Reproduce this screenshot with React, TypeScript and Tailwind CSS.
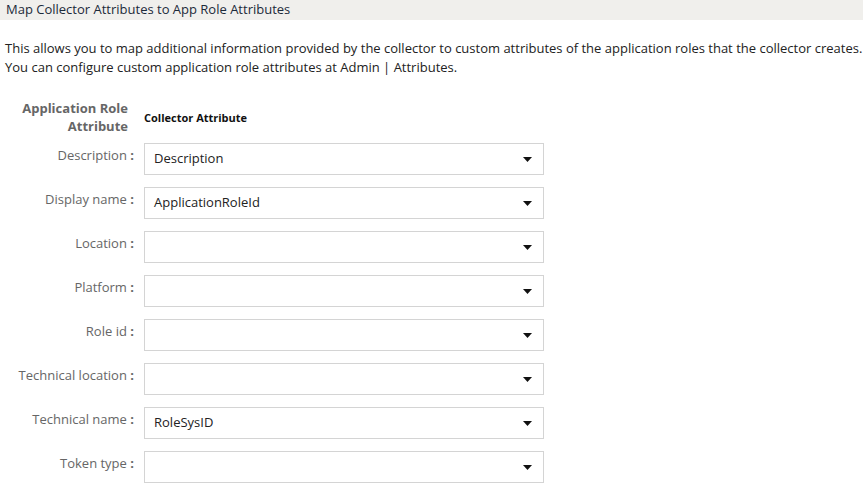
const rows: { label: string; value: string }[] = [
  { label: "Description", value: "Description" },
  { label: "Display name", value: "ApplicationRoleId" },
  { label: "Location", value: "" },
  { label: "Platform", value: "" },
  { label: "Role id", value: "" },
  { label: "Technical location", value: "" },
  { label: "Technical name", value: "RoleSysID" },
  { label: "Token type", value: "" },
];

function SelectBox({ value }: { value: string }) {
  return (
    <div className="flex h-[32px] w-[400px] items-center justify-between border border-[#d4d4d4] bg-white pl-[9px] pr-[11px] text-[13px] text-[#222]">
      <span>{value}</span>
      <svg width="9" height="5" viewBox="0 0 9 5" className="mt-[1px]">
        <path d="M0 0h9L4.5 5z" fill="#111" />
      </svg>
    </div>
  );
}

export default function App() {
  return (
    <div className="h-[491px] w-[863px] overflow-hidden bg-white font-['Open_Sans',sans-serif]">
      <div className="flex h-[20px] items-center bg-[#f0efec] pl-[6px] text-[13px] text-[#1c2a3a]">
        Map Collector Attributes to App Role Attributes
      </div>

      <div className="mt-[19px] pl-[5px] text-[13px] leading-[19px] text-[#222]">
        <p>
          This allows you to map additional information provided by the collector to custom attributes of the
          application roles that the collector creates.
        </p>
        <p>You can configure custom application role attributes at Admin | Attributes.</p>
      </div>

      <div className="mt-[22px] flex items-center">
        <div className="w-[128px] text-right text-[13px] font-bold leading-[18px] text-[#666]">
          Application Role
          <br />
          Attribute
        </div>
        <div className="ml-[16px] mt-[2px] text-[11px] font-bold text-[#111]">Collector Attribute</div>
      </div>

      <div className="mt-[8px] flex flex-col gap-[12px]">
        {rows.map((r) => (
          <div key={r.label} className="flex items-start">
            <div className="w-[134px] pt-[3px] text-right text-[13px] text-[#666]">
              {r.label} <span className="font-bold">:</span>
            </div>
            <div className="ml-[10px]">
              <SelectBox value={r.value} />
            </div>
          </div>
        ))}
      </div>
    </div>
  );
}
